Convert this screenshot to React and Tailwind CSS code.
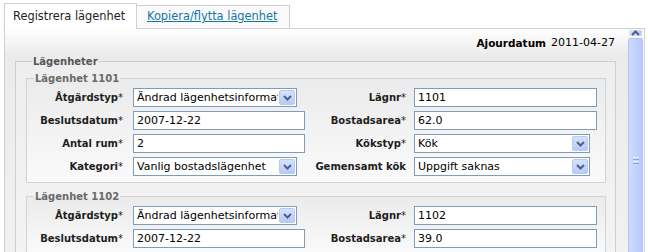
import React from "react";

function Chevron({ up = false }) {
  return (
    <svg width="9" height="6" viewBox="0 0 9 6" className="block">
      <path
        d={up ? "M1 5 L4.5 1.5 L8 5" : "M1 1 L4.5 4.5 L8 1"}
        fill="none"
        stroke="#4d6185"
        strokeWidth="2"
      />
    </svg>
  );
}

function Label({ children, required, width }) {
  return (
    <div className={`${width} shrink-0 text-right text-[10px] font-bold leading-[13px] text-[#1e1e1e] whitespace-nowrap`}>
      {children}
      {required && <span className="font-normal">*</span>}
    </div>
  );
}

function TextInput({ value, width }) {
  return (
    <div className={`${width} h-[19px] border border-[#7f9db9] bg-white pl-[3px] text-[11px] leading-[17px] text-black whitespace-nowrap overflow-hidden`}>
      {value}
    </div>
  );
}

function Select({ value, width }) {
  return (
    <div className={`${width} h-[19px] flex border border-[#7f9db9] bg-white`}>
      <div className="flex-1 pl-[3px] text-[11px] leading-[17px] text-black whitespace-nowrap overflow-hidden">
        {value}
      </div>
      <div className="w-[16px] m-[1px] flex items-center justify-center rounded-[2px] border border-[#b9c9ef] bg-[linear-gradient(#d6e2fd,#b7cbf9)]">
        <Chevron />
      </div>
    </div>
  );
}

function Field({ f, inputW, selectW }) {
  if (!f) return null;
  return f.select ? <Select value={f.value} width={selectW} /> : <TextInput value={f.value} width={inputW} />;
}

function Apartment({ title, rows, className = "" }) {
  return (
    <fieldset className={`border border-[#d3d3d3] pt-[3px] pb-[6px] pr-[8px] bg-[linear-gradient(#ebebeb,#fafafa)] ${className}`}>
      <legend className="ml-[7px] px-[1px] text-[10px] font-bold leading-[13px] text-[#6a6a6a]">{title}</legend>
      <div className="flex flex-col gap-[4px]">
        {rows.map((r, i) => (
          <div key={i} className="flex h-[19px] items-center">
            <Label width="w-[96px]" required={r.left.req}>{r.left.label}</Label>
            <div className="ml-[10px] w-[172px] shrink-0">
              <Field f={r.left} inputW="w-[172px]" selectW="w-[164px]" />
            </div>
            <Label width="w-[101px]" required={r.right.req}>{r.right.label}</Label>
            <div className="ml-[8px] w-[183px] shrink-0">
              <Field f={r.right} inputW="w-[183px]" selectW="w-[176px]" />
            </div>
          </div>
        ))}
      </div>
    </fieldset>
  );
}

export default function App() {
  const first = [
    {
      left: { label: "Åtgärdstyp", req: true, value: "Ändrad lägenhetsinformation", select: true },
      right: { label: "Lägnr", req: true, value: "1101" },
    },
    {
      left: { label: "Beslutsdatum", req: true, value: "2007-12-22" },
      right: { label: "Bostadsarea", req: true, value: "62.0" },
    },
    {
      left: { label: "Antal rum", req: true, value: "2" },
      right: { label: "Kökstyp", req: true, value: "Kök", select: true },
    },
    {
      left: { label: "Kategori", req: true, value: "Vanlig bostadslägenhet", select: true },
      right: { label: "Gemensamt kök", req: false, value: "Uppgift saknas", select: true },
    },
  ];
  const second = [
    {
      left: { label: "Åtgärdstyp", req: true, value: "Ändrad lägenhetsinformation", select: true },
      right: { label: "Lägnr", req: true, value: "1102" },
    },
    {
      left: { label: "Beslutsdatum", req: true, value: "2007-12-22" },
      right: { label: "Bostadsarea", req: true, value: "39.0" },
    },
  ];

  return (
    <div className="w-[648px] h-[252px] overflow-hidden bg-white font-['DejaVu_Sans',Verdana,sans-serif]">
      {/* Tabs */}
      <div className="flex h-[28px] items-end pl-[4px]">
        <div className="relative z-10 -mb-px flex h-[26px] w-[133px] items-center border-l border-t border-r border-[#cfcfcf] bg-white pl-[8px] text-[11.4px] text-[#222]">
          Registrera lägenhet
        </div>
        <div className="flex h-[23px] w-[153px] items-center border-t border-r border-[#cfcfcf] bg-[#fafafa] pl-[10px] text-[11.4px] text-[#1079a0] underline">
          Kopiera/flytta lägenhet
        </div>
      </div>

      {/* Panel */}
      <div className="ml-[4px] flex h-[230px] w-[641px] border border-[#cfcfcf]">
        <div className="flex-1 overflow-hidden bg-[linear-gradient(#ffffff_0px,#ebebeb_26px,#f1f1f1_100%)]">
          <div className="flex h-[14px] mt-[7px] justify-end pr-[13px] text-[11px] leading-[14px] text-black">
            <span className="font-bold text-[10.5px]">Ajourdatum</span>
            <span className="ml-[5px]">2011-04-27</span>
          </div>

          <fieldset className="mt-[5px] ml-[10px] w-[601px] border border-[#cfcfcf] pl-[10px] pr-[9px] pt-[4px] bg-[linear-gradient(#eeeeee,#f3f3f3)]">
            <legend className="ml-[6px] px-[1px] text-[10px] font-bold leading-[13px] text-[#555]">Lägenheter</legend>
            <Apartment title="Lägenhet 1101" rows={first} />
            <Apartment title="Lägenhet 1102" rows={second} className="mt-[7px]" />
          </fieldset>
        </div>

        {/* Scrollbar */}
        <div className="mr-[1px] flex w-[15px] flex-col bg-[#f3f3ef]">
          <div className="flex h-[16px] items-center justify-center rounded-[2px] border border-white bg-[linear-gradient(90deg,#d3e0fd,#bccffb)]">
            <Chevron up />
          </div>
          <div className="mt-[1px] flex h-[244px] shrink-0 flex-col items-center justify-center rounded-[2px] border border-[#b4c6f0] bg-[linear-gradient(90deg,#cddbfd,#b7cafa)]">
            <div className="flex flex-col gap-[1px]">
              <div className="h-px w-[6px] bg-[#eef3ff]" />
              <div className="h-px w-[6px] bg-[#8ca5dd]" />
              <div className="h-px w-[6px] bg-[#eef3ff]" />
              <div className="h-px w-[6px] bg-[#8ca5dd]" />
            </div>
          </div>
        </div>
      </div>
    </div>
  );
}
